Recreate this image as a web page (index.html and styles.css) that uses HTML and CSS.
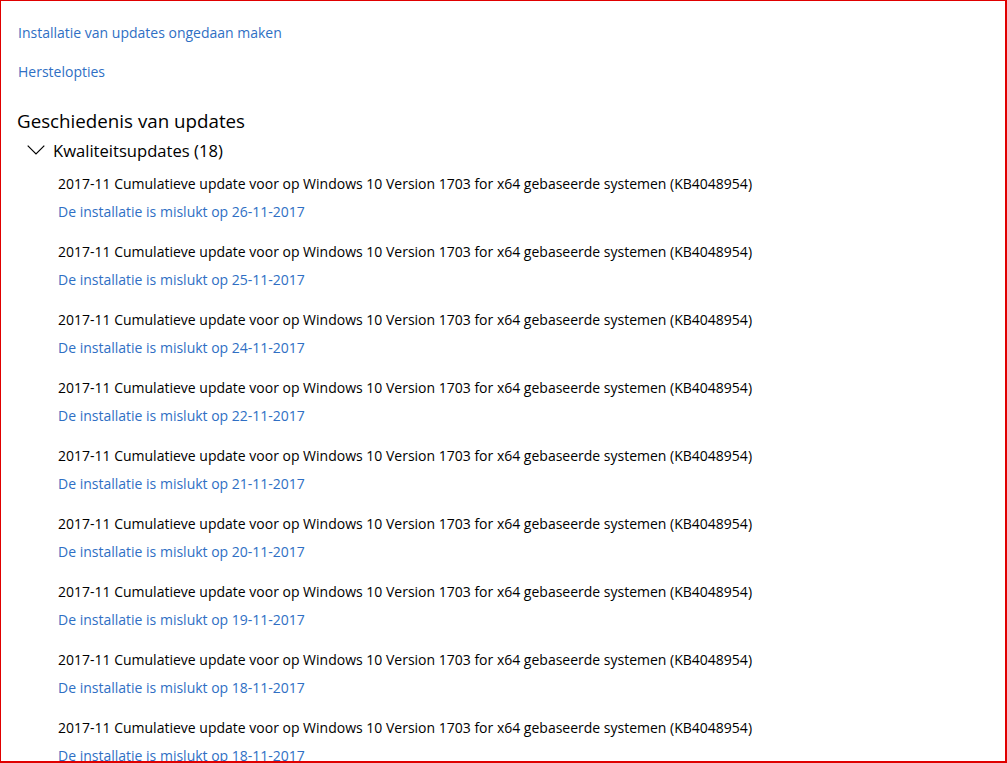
FILE: index.html
```html
<!DOCTYPE html>
<html lang="nl">
<head>
    <meta charset="UTF-8">
    <meta name="viewport" content="width=device-width, initial-scale=1.0">
    <title>Geschiedenis van updates</title>
    <link rel="stylesheet" href="styles.css">
</head>
<body>

    <div class="frame">
        <a class="link top-link" href="#">Installatie van updates ongedaan maken</a>
        <a class="link top-link second" href="#">Herstelopties</a>

        <h1>Geschiedenis van updates</h1>

        <div class="group-header">
            <svg class="chevron" width="18" height="10" viewBox="0 0 18 10">
                <polyline points="0.7,0.7 9,9 17.3,0.7" fill="none" stroke="#000" stroke-width="1.2"/>
            </svg>
            <span>Kwaliteitsupdates (18)</span>
        </div>

        <div class="updates">
            <div class="update">
                <div class="title">2017-11 Cumulatieve update voor op Windows 10 Version 1703 for x64 gebaseerde systemen (KB4048954)</div>
                <a class="link" href="#">De installatie is mislukt op 26-11-2017</a>
            </div>
            <div class="update">
                <div class="title">2017-11 Cumulatieve update voor op Windows 10 Version 1703 for x64 gebaseerde systemen (KB4048954)</div>
                <a class="link" href="#">De installatie is mislukt op 25-11-2017</a>
            </div>
            <div class="update">
                <div class="title">2017-11 Cumulatieve update voor op Windows 10 Version 1703 for x64 gebaseerde systemen (KB4048954)</div>
                <a class="link" href="#">De installatie is mislukt op 24-11-2017</a>
            </div>
            <div class="update">
                <div class="title">2017-11 Cumulatieve update voor op Windows 10 Version 1703 for x64 gebaseerde systemen (KB4048954)</div>
                <a class="link" href="#">De installatie is mislukt op 22-11-2017</a>
            </div>
            <div class="update">
                <div class="title">2017-11 Cumulatieve update voor op Windows 10 Version 1703 for x64 gebaseerde systemen (KB4048954)</div>
                <a class="link" href="#">De installatie is mislukt op 21-11-2017</a>
            </div>
            <div class="update">
                <div class="title">2017-11 Cumulatieve update voor op Windows 10 Version 1703 for x64 gebaseerde systemen (KB4048954)</div>
                <a class="link" href="#">De installatie is mislukt op 20-11-2017</a>
            </div>
            <div class="update">
                <div class="title">2017-11 Cumulatieve update voor op Windows 10 Version 1703 for x64 gebaseerde systemen (KB4048954)</div>
                <a class="link" href="#">De installatie is mislukt op 19-11-2017</a>
            </div>
            <div class="update">
                <div class="title">2017-11 Cumulatieve update voor op Windows 10 Version 1703 for x64 gebaseerde systemen (KB4048954)</div>
                <a class="link" href="#">De installatie is mislukt op 18-11-2017</a>
            </div>
            <div class="update">
                <div class="title">2017-11 Cumulatieve update voor op Windows 10 Version 1703 for x64 gebaseerde systemen (KB4048954)</div>
                <a class="link" href="#">De installatie is mislukt op 18-11-2017</a>
            </div>
        </div>
    </div>

</body>
</html>
```

FILE: styles.css
```css
body {
    margin: 0;
    background-color: #fff;
    font-family: "Open Sans", "Noto Sans", sans-serif;
    color: #000;
}

.frame {
    width: 1007px;
    height: 763px;
    box-sizing: border-box;
    border: 1px solid #e00000;
    border-right-width: 2px;
    border-bottom-width: 2px;
    padding: 22px 0 0 16px;
    overflow: hidden;
}

.link {
    display: block;
    color: #2f6fc4;
    text-decoration: none;
    font-size: 14px;
    line-height: 20px;
    white-space: nowrap;
}

.top-link {
    margin-left: 1px;
}

.top-link.second {
    margin-top: 19px;
}

h1 {
    margin: 25px 0 0;
    font-size: 18.75px;
    font-weight: normal;
    line-height: 28px;
}

.group-header {
    display: flex;
    align-items: center;
    margin-top: 3px;
    height: 24px;
    font-size: 16.6px;
}

.chevron {
    margin: 0 8px 0 10px;
}

.updates {
    margin-top: 12px;
    padding-left: 41px;
}

.update {
    display: flex;
    flex-direction: column;
    gap: 8px;
    margin-bottom: 20px;
}

.title {
    font-size: 14px;
    line-height: 20px;
    white-space: nowrap;
}
```
